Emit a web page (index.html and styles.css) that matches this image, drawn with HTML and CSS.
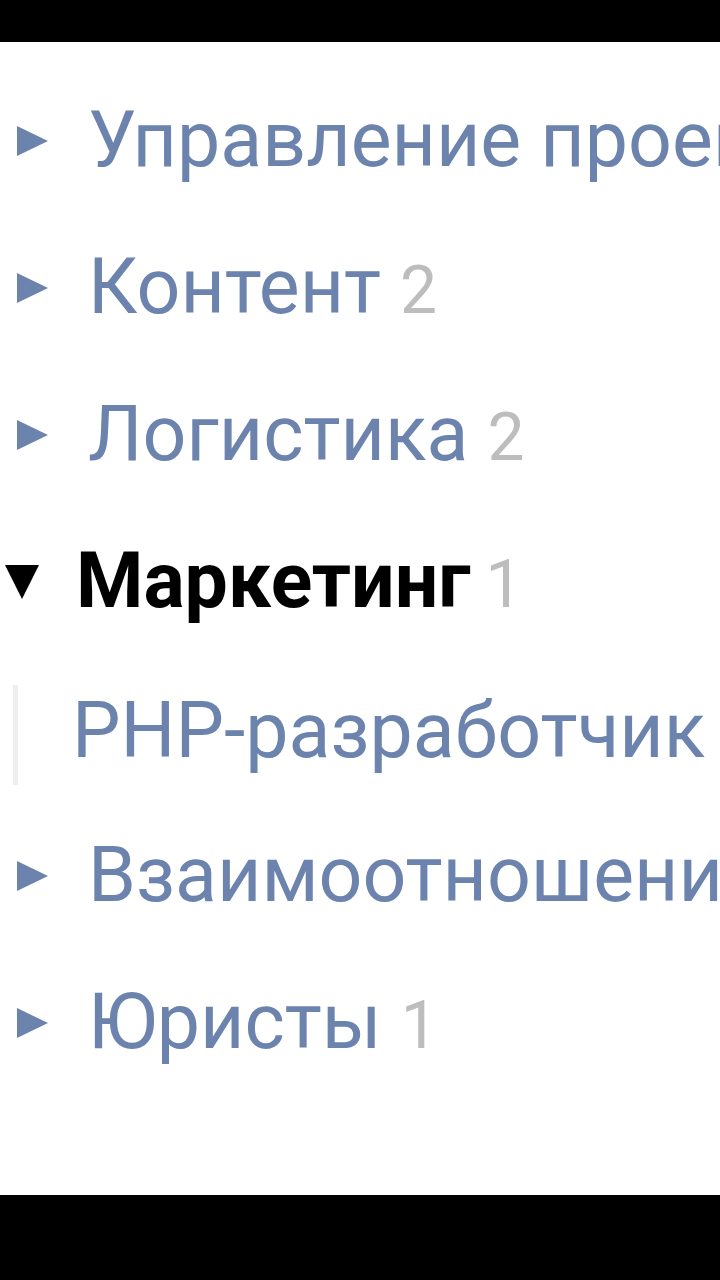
FILE: index.html
```html
<!DOCTYPE html>
<html lang="ru">
<head>
    <meta charset="UTF-8">
    <meta name="viewport" content="width=device-width, initial-scale=1.0">
    <title>Отделы</title>
    <link rel="stylesheet" href="styles.css">
</head>
<body>
    <div class="bar top-bar"></div>
    <main class="tree">
        <div class="row">
            <svg class="arrow" viewBox="0 0 31 30"><polygon points="0,0 31,15 0,30"/></svg>
            <span class="name">Управление проектами</span>
        </div>
        <div class="row">
            <svg class="arrow" viewBox="0 0 31 30"><polygon points="0,0 31,15 0,30"/></svg>
            <span class="name">Контент</span> <span class="count">2</span>
        </div>
        <div class="row">
            <svg class="arrow" viewBox="0 0 31 30"><polygon points="0,0 31,15 0,30"/></svg>
            <span class="name">Логистика</span> <span class="count">2</span>
        </div>
        <div class="row open">
            <svg class="arrow down" viewBox="0 0 34 34"><polygon points="0,0 34,0 17,34"/></svg>
            <span class="name">Маркетинг</span> <span class="count">1</span>
        </div>
        <div class="children">
            <div class="row child">
                <span class="name">PHP-разработчик</span>
            </div>
        </div>
        <div class="row">
            <svg class="arrow" viewBox="0 0 31 30"><polygon points="0,0 31,15 0,30"/></svg>
            <span class="name">Взаимоотношения с клиентами</span>
        </div>
        <div class="row">
            <svg class="arrow" viewBox="0 0 31 30"><polygon points="0,0 31,15 0,30"/></svg>
            <span class="name">Юристы</span> <span class="count">1</span>
        </div>
    </main>
    <div class="bar bottom-bar"></div>
</body>
</html>
```

FILE: styles.css
```css
* {
    margin: 0;
    padding: 0;
    box-sizing: border-box;
}

body {
    display: flex;
    flex-direction: column;
    height: 1280px;
    width: 720px;
    background: #fff;
    font-family: Roboto, "Noto Sans", sans-serif;
    overflow: hidden;
}

.bar {
    background: #000;
    flex-shrink: 0;
}

.top-bar {
    height: 42px;
}

.bottom-bar {
    height: 85px;
}

.tree {
    flex: 1;
    padding-top: 25px;
    overflow: hidden;
}

.row {
    display: flex;
    align-items: baseline;
    height: 147px;
    font-size: 77px;
    line-height: 147px;
    white-space: nowrap;
    color: #6b83ad;
}

.arrow {
    align-self: center;
    width: 31px;
    height: 30px;
    margin-left: 17px;
    margin-right: 40px;
    fill: #6b83ad;
    flex-shrink: 0;
}

.arrow.down {
    width: 34px;
    height: 34px;
    margin-left: 5px;
    margin-right: 37px;
    fill: #000;
}

.open .name {
    color: #000;
    font-weight: bold;
}

.count {
    color: #bdbdbd;
    font-size: 66px;
    margin-left: 19px;
}

.open .count {
    margin-left: 15px;
}

.children {
    padding: 0 0 0 13px;
}

.child {
    border-left: 5px solid #eeeeee;
    height: 100px;
    line-height: 92px;
    padding-left: 54px;
    padding-bottom: 8px;
    margin: 30px 0 17px;
}
```
